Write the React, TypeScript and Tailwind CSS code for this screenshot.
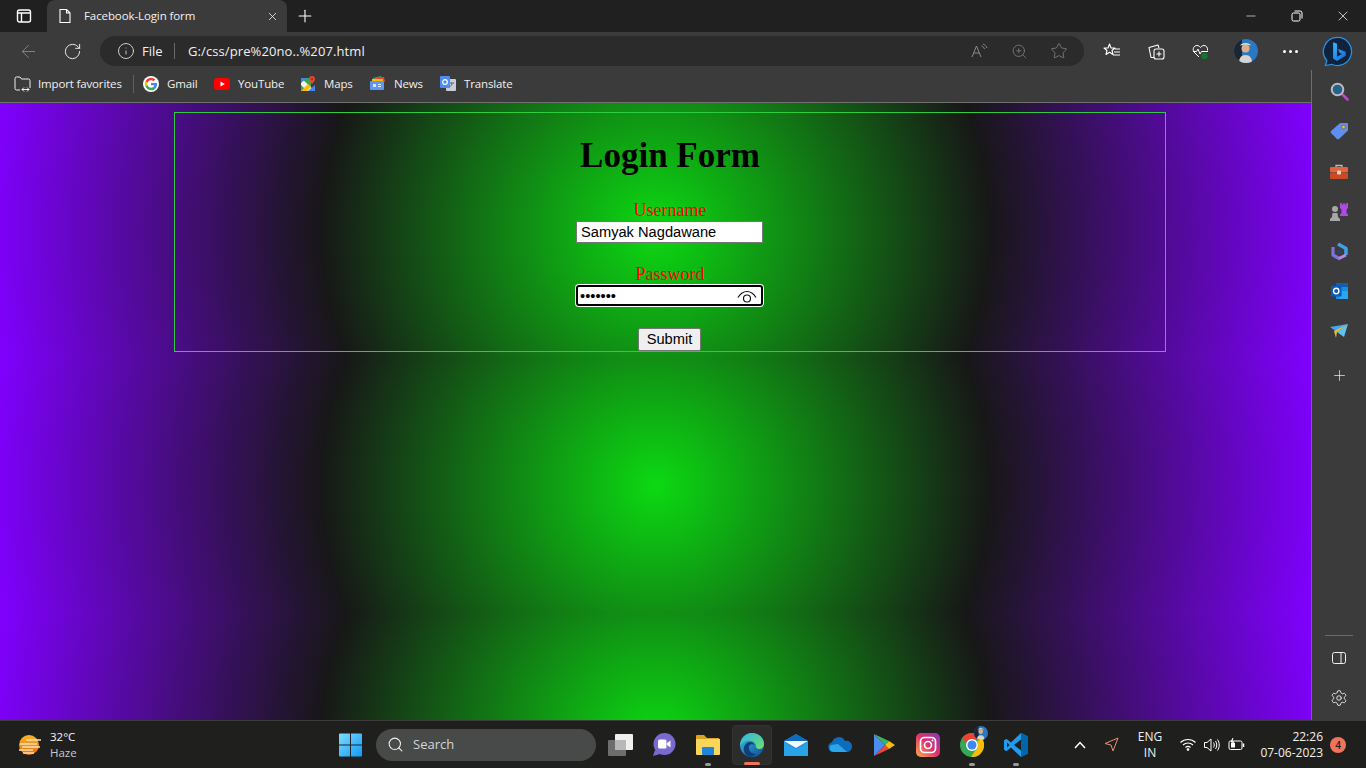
import { ArrowLeft, Info, Minus, Plus, RotateCw, Search, Settings, Star, X, ZoomIn } from "lucide-react";
import type { ReactNode } from "react";

const bookmarks = [
  { label: "Gmail", icon: <GoogleIcon />, width: "w-[71px]" },
  { label: "YouTube", icon: <YouTubeIcon />, width: "w-[86px]" },
  { label: "Maps", icon: <MapsIcon />, width: "w-[70px]" },
  { label: "News", icon: <NewsIcon />, width: "w-[70px]" },
  { label: "Translate", icon: <TranslateIcon />, width: "w-[87px]" },
];

function GoogleIcon() {
  return (
    <svg width="16" height="16" viewBox="0 0 48 48">
      <circle cx="24" cy="24" r="24" fill="#fff" />
      <path fill="#EA4335" d="M24 13c3 0 5.400 1 7.300 2.800l5.400-5.400C33.400 7.300 29 5.500 24 5.500c-7.200 0-13.500 4.100-16.500 10.200l6.300 4.900C15.300 16.100 19.300 13 24 13z" />
      <path fill="#4285F4" d="M42 24.500c0-1.300-.1-2.500-.3-3.700H24v7.200h10.200c-.5 2.400-1.800 4.400-3.800 5.700l6.100 4.700C40 35.100 42 30.200 42 24.500z" />
      <path fill="#FBBC05" d="M13.800 27.400c-.9-2.500-.9-4.400 0-6.800l-6.300-4.900c-2.600 5.200-2.600 11.400 0 16.600l6.300-4.900z" />
      <path fill="#34A853" d="M24 42.500c5 0 9.200-1.600 12.500-4.600l-6.100-4.700c-1.700 1.100-3.800 1.800-6.400 1.800-4.700 0-8.700-3.100-10.200-7.500l-6.300 4.900c3 6 9.300 10.100 16.500 10.100z" />
    </svg>
  );
}

function YouTubeIcon() {
  return (
    <svg width="16" height="12" viewBox="0 0 16 12">
      <rect width="16" height="12" rx="3" fill="#f00" />
      <path d="M6.500 3.500 10.800 6 6.500 8.500z" fill="#fff" />
    </svg>
  );
}

function MapsIcon() {
  return (
    <svg width="16" height="16" viewBox="0 0 16 16">
      <path d="M1 2h10v13H1z" fill="#34a853" />
      <path d="M1 2 15 15H7L1 9z" fill="#f1f3f4" />
      <path d="M1 15 8 8l3 3-4 4z" fill="#fbbc05" />
      <path d="M1 2h6L1 7z" fill="#4285f4" />
      <path d="M8 15h7V9z" fill="#4285f4" />
      <path d="M12 0a3 3 0 0 1 3 3c0 2-3 5-3 5S9 5 9 3a3 3 0 0 1 3-3z" fill="#ea4335" />
      <circle cx="12" cy="3" r="1" fill="#a52714" />
    </svg>
  );
}

function NewsIcon() {
  return (
    <svg width="16" height="15" viewBox="0 0 16 15">
      <path d="M3 2 11 0l1 4H3z" fill="#34a853" />
      <path d="M6 1h8l1 5H6z" fill="#ea4335" />
      <path d="M2 3h11v3H2z" fill="#fbbc05" />
      <rect x="0" y="5" width="14" height="9" rx="1" fill="#5e97f6" />
      <rect x="3" y="8" width="3" height="3" fill="#dbe7fb" />
      <rect x="8" y="8" width="3" height="1" fill="#dbe7fb" />
      <rect x="8" y="10" width="3" height="1" fill="#dbe7fb" />
    </svg>
  );
}

function TranslateIcon() {
  return (
    <svg width="16" height="16" viewBox="0 0 16 16">
      <rect x="6" y="3" width="10" height="12" rx="1" fill="#c9ced6" />
      <rect x="0" y="0" width="10" height="12" rx="1" fill="#4f8df5" />
      <circle cx="5" cy="6" r="2.300" fill="none" stroke="#fff" strokeWidth="1.200" />
      <path d="M10 7h4M12 7c0 2-1 3-2.500 4" stroke="#5f6368" strokeWidth="1" fill="none" />
    </svg>
  );
}

function Avatar({ size }: { size: number }) {
  return (
    <svg width={size} height={size} viewBox="0 0 24 24">
      <defs>
        <clipPath id={`avatar-${size}`}>
          <circle cx="12" cy="12" r="12" />
        </clipPath>
      </defs>
      <g clipPath={`url(#avatar-${size})`}>
        <rect width="24" height="24" fill="#2a78c4" />
        <rect width="8" height="24" fill="#1c2633" />
        <path d="M5 24c0-5 2-8 6.500-8s6.500 3 6.500 8z" fill="#d8d3cd" />
        <circle cx="11.500" cy="9.500" r="4" fill="#d9b08f" />
        <path d="M6 6.500c1-3.500 10-3.500 11 0-3-1-8-1-11 0z" fill="#dfe3b8" />
      </g>
    </svg>
  );
}

function BingIcon() {
  return (
    <svg width="31" height="31" viewBox="0 0 32 32">
      <defs>
        <linearGradient id="bing-fill" x1="0" y1="0" x2="1" y2="1">
          <stop offset="0" stopColor="#37bdff" />
          <stop offset="1" stopColor="#1b5fd6" />
        </linearGradient>
      </defs>
      <path d="M16 1.500a14.500 14.500 0 1 1-6 27.700L3.500 30.500l1.500-5A14.500 14.500 0 0 1 16 1.500z" fill="#10233c" stroke="#2a8fe0" strokeWidth="1.300" />
      <path d="M11.500 6.500 15.500 8v13.500l5-3-2.500-1.200-1.500-4 8 3v4l-9 5.500-4-2.500z" fill="url(#bing-fill)" />
    </svg>
  );
}

function SidebarIcon({ children }: { children: ReactNode }) {
  return <div className="flex h-[40px] w-full items-center justify-center">{children}</div>;
}

function WindowsLogo() {
  return (
    <svg className="ml-[1px]" width="23" height="24" viewBox="0 0 24 24">
      <defs>
        <linearGradient id="win-logo" x1="0" y1="0" x2="1" y2="1">
          <stop offset="0" stopColor="#7fdcff" />
          <stop offset="1" stopColor="#0f9bf5" />
        </linearGradient>
      </defs>
      <path d="M0 1a1 1 0 0 1 1-1h10.500v11.500H0zM12.500 0H23a1 1 0 0 1 1 1v10.500H12.500zM0 12.500h11.500V24H1a1 1 0 0 1-1-1zM12.500 12.500H24V23a1 1 0 0 1-1 1H12.500z" fill="url(#win-logo)" />
    </svg>
  );
}

function TaskCell({ children, dot, active }: { children: ReactNode; dot?: boolean; active?: boolean }) {
  return (
    <div className="relative flex h-[40px] w-[44px] items-center justify-center">
      {active && <div className="absolute left-[2px] top-0 h-[40px] w-[40px] rounded-[4px] border border-[#333432] bg-[#2c2d2b]" />}
      <div className="relative flex items-center justify-center">{children}</div>
      {dot && <div className="absolute bottom-[-1px] left-[19px] h-[3px] w-[6px] rounded-full bg-[#9a9a9a]" />}
      {active && <div className="absolute bottom-[0px] left-[14px] h-[3px] w-[16px] rounded-full bg-[#f0735c]" />}
    </div>
  );
}

function App() {
  return (
    <div className="flex h-screen w-full flex-col overflow-hidden bg-[#202020] font-['Open_Sans',sans-serif] text-white">
      {/* title bar */}
      <div className="flex h-[32px] shrink-0 items-stretch bg-[#202020]">
        <div className="flex w-[47px] items-center justify-center">
          <svg width="16" height="16" viewBox="0 0 16 16" fill="none" stroke="#fff" strokeWidth="1.400">
            <rect x="1.500" y="2" width="13" height="12" rx="2" />
            <path d="M1.500 5h13M5.500 5v9" />
          </svg>
        </div>
        <div className="flex w-[240px] items-center rounded-t-[8px] bg-[#3b3b3b] pl-[10px] pr-[10px]">
          <svg width="16" height="16" viewBox="0 0 16 16" fill="none" stroke="#fff" strokeWidth="1.100">
            <path d="M3 1.500h6.500L13 5v9.500H3zM9.500 1.500V5H13" strokeLinejoin="round" />
          </svg>
          <span className="ml-[11px] text-[11.5px] leading-none tracking-[-0.1px] text-[#f2f2f2]">Facebook-Login form</span>
          <X className="ml-auto mr-[-2px]" size={13} strokeWidth={1.500} color="#f0f0f0" />
        </div>
        <div className="flex w-[36px] items-center justify-center">
          <Plus size={20} strokeWidth={1.300} color="#fff" />
        </div>
        <div className="ml-auto flex items-center">
          <div className="flex w-[46px] items-center justify-center"><Minus size={14} strokeWidth={1.100} color="#fff" /></div>
          <div className="flex w-[46px] items-center justify-center">
            <svg width="12" height="12" viewBox="0 0 12 12" fill="none" stroke="#fff" strokeWidth="1">
              <rect x="1" y="3" width="8" height="8" rx="1.500" />
              <path d="M3.500 1h5.500a2 2 0 0 1 2 2v5.500" />
            </svg>
          </div>
          <div className="flex w-[46px] items-center justify-center"><X size={16} strokeWidth={1.100} color="#fff" /></div>
        </div>
      </div>

      {/* toolbar */}
      <div className="flex h-[38px] shrink-0 items-center bg-[#3b3b3b] pl-[6px]">
        <div className="flex w-[44px] justify-center"><ArrowLeft size={21} strokeWidth={1} color="#8a8a8a" /></div>
        <div className="flex w-[44px] justify-center"><RotateCw size={19} strokeWidth={1.200} color="#f0f0f0" /></div>
        <div className="ml-[6px] flex h-[30px] w-[984px] items-center rounded-full bg-[#2b2b2b] pl-[17px] text-[#f0f0f0]">
          <Info size={18} strokeWidth={1.100} color="#e8e8e8" />
          <span className="ml-[7px] w-[21px] whitespace-nowrap text-[13px] leading-none">File</span>
          <div className="ml-[11px] h-[16px] w-px bg-[#6a6a6a]" />
          <span className="ml-[13px] whitespace-nowrap text-[13px] leading-none tracking-[0.1px]">G:/css/pre%20no..%207.html</span>
          <div className="ml-auto flex items-center pr-[5px]">
            <div className="flex w-[40px] justify-center">
              <svg width="17" height="16" viewBox="0 0 17 16" fill="none" stroke="#8a8a8a" strokeWidth="1">
                <path d="M1 14 5.500 3 10 14M2.800 10h5.400M10.500 3c1.500.5 2.500 1.500 3 3M12 1c2 .8 3.300 2 4 4" />
              </svg>
            </div>
            <div className="flex w-[40px] justify-center"><ZoomIn size={17} strokeWidth={1} color="#8a8a8a" /></div>
            <div className="flex w-[40px] justify-center"><Star size={18} strokeWidth={1} color="#8a8a8a" /></div>
          </div>
        </div>
        <div className="ml-[6px] flex w-[44px] justify-center">
          <svg width="18" height="16" viewBox="0 0 18 16" fill="none" stroke="#fff" strokeWidth="1.100">
            <path d="M6.500 1 8 5h4L9 7.500l1 4-3.500-2.300L3 11.500l1-4L1 5h4zM12 6h5M11 9h6M10 12h7" strokeLinejoin="round" />
          </svg>
        </div>
        <div className="flex w-[44px] justify-center">
          <svg width="17" height="17" viewBox="0 0 17 17" fill="none" stroke="#fff" strokeWidth="1.100">
            <path d="M6 14.500H3L1 4.500 10 2l1 3" strokeLinejoin="round" />
            <rect x="6" y="6" width="10" height="10" rx="2" />
            <path d="M11 8.500v5M8.500 11h5" />
          </svg>
        </div>
        <div className="flex w-[44px] justify-center">
          <svg width="17" height="17" viewBox="0 0 17 17" fill="none">
            <path d="M7 14 2 9c-2-3 0-6.500 3-6.500 1.500 0 2.500.8 3.500 2 1-1.200 2-2 3.500-2 2.500 0 4 2.500 3.500 5M1 8.500h3.500L6 6l2 5 1.500-2.500H16" stroke="#fff" strokeWidth="1" />
            <circle cx="12.500" cy="13" r="3.200" fill="#10762c" />
          </svg>
        </div>
        <div className="ml-[2px] flex w-[44px] justify-center"><Avatar size={24} /></div>
        <div className="flex w-[44px] items-center justify-center gap-[3px]">
          <span className="h-[3px] w-[3px] rounded-full bg-white" />
          <span className="h-[3px] w-[3px] rounded-full bg-white" />
          <span className="h-[3px] w-[3px] rounded-full bg-white" />
        </div>
        <div className="ml-[3px] flex w-[44px] justify-center"><BingIcon /></div>
      </div>

      <div className="flex min-h-0 flex-1">
        <div className="flex min-w-0 flex-1 flex-col">
          {/* favorites bar */}
          <div className="flex h-[33px] shrink-0 items-center border-b border-[#707070] bg-[#3b3b3b] pb-[5px] pl-[14px] text-[11.5px] tracking-[-0.15px] text-[#f0f0f0]">
            <svg width="17" height="16" viewBox="0 0 17 16" fill="none" stroke="#f0f0f0" strokeWidth="1">
              <path d="M6 14H2.500A1.500 1.500 0 0 1 1 12.500v-10A1.500 1.500 0 0 1 2.500 1H6l1.500 2H14.500A1.500 1.500 0 0 1 16 4.500V12M8 13.500h7M10 11.500l-2 2 2 2M13 11.500l2 2-2 2" />
            </svg>
            <span className="ml-[7px] w-[85px] whitespace-nowrap leading-none">Import favorites</span>
            <div className="ml-[10px] mr-[9px] h-[18px] w-px bg-[#606060]" />
            {bookmarks.map((item) => (
              <div key={item.label} className={`flex items-center ${item.width}`}>
                <div className="flex w-[16px] justify-center">{item.icon}</div>
                <span className="ml-[8px] whitespace-nowrap leading-none">{item.label}</span>
              </div>
            ))}
          </div>

          {/* page */}
          <main className="min-h-0 flex-1 bg-[radial-gradient(circle,#0cd912,#171717,#8000ff)] bg-[length:100%_255px] pt-[9px] text-black">
            <form className="ml-[174px] flex h-[240px] w-[992px] flex-col items-center border border-[#2ecc40] pt-[22px]">
              <h1 className="font-['Liberation_Serif',serif] text-[35px] font-bold leading-[41px]">Login Form</h1>
              <label className="mt-[24px] font-['Liberation_Serif',serif] text-[18px] leading-[21px] text-[#ff0000]">Username</label>
              <input
                readOnly
                value="Samyak Nagdawane"
                className="mr-[1px] h-[22px] w-[187px] rounded-[1px] border border-[#767676] bg-white px-[4px] font-['Liberation_Sans',sans-serif] text-[14.67px] leading-none text-black outline-none"
              />
              <label className="mt-[21px] font-['Liberation_Serif',serif] text-[18px] leading-[21px] text-[#ff0000]">Password</label>
              <div className="relative mr-[1px]">
                <input
                  readOnly
                  type="password"
                  value="samyak1"
                  className="block h-[21px] w-[187px] rounded-[3px] border-2 border-black bg-white px-[2px] font-['Liberation_Sans',sans-serif] text-[14.67px] leading-none text-black shadow-[0_0_0_1px_#fff] outline-none"
                />
                <svg className="absolute right-[6px] top-[5px]" width="20" height="13" viewBox="0 0 20 13" fill="none" stroke="#111" strokeWidth="1.200">
                  <path d="M1 7.500C3.500 3.500 6.500 1.500 10 1.500s6.500 2 9 6" />
                  <circle cx="10" cy="8.500" r="3.500" />
                </svg>
              </div>
              <button type="button" className="mr-[1px] mt-[22px] h-[23px] w-[63px] rounded-[2px] border border-[#767676] bg-[#efefef] font-['Liberation_Sans',sans-serif] text-[14.67px] leading-none text-black">Submit</button>
            </form>
          </main>
        </div>

        {/* edge sidebar */}
        <aside className="flex w-[55px] shrink-0 flex-col items-center border-l border-[#6e6e6e] bg-[#3b3b3b] pt-[1px]">
          <SidebarIcon>
            <svg width="19" height="19" viewBox="0 0 19 19" fill="none">
              <path d="m12 12 5.500 5.500" stroke="#c545d8" strokeWidth="2.500" strokeLinecap="round" />
              <circle cx="7.500" cy="7.500" r="5.800" fill="#27628f" stroke="#b9bcc0" strokeWidth="2" />
            </svg>
          </SidebarIcon>
          <SidebarIcon>
            <svg width="19" height="18" viewBox="0 0 19 18">
              <path d="M11 1h6a1 1 0 0 1 1 1v6a2 2 0 0 1-.5 1L9 17a1.500 1.500 0 0 1-2 0L1 11a1.500 1.500 0 0 1 0-2l8.500-7.500A2 2 0 0 1 11 1z" fill="#5f8df0" />
              <circle cx="13.500" cy="5" r="1.800" fill="#f2c230" stroke="#6a5a20" strokeWidth="0.600" />
            </svg>
          </SidebarIcon>
          <SidebarIcon>
            <svg width="18" height="15" viewBox="0 0 18 15">
              <path d="M6 3V1.500h6V3" fill="none" stroke="#b9b9b9" strokeWidth="1.300" />
              <rect y="3" width="18" height="5.500" rx="1" fill="#e8633a" />
              <rect y="9" width="18" height="6" rx="1" fill="#c94a24" />
              <rect x="7" y="6.500" width="4" height="4" rx="1" fill="#f2cdb9" />
            </svg>
          </SidebarIcon>
          <SidebarIcon>
            <svg width="20" height="19" viewBox="0 0 20 19">
              <path d="M11 1h1.800v1.500h1.500V1h1.400v1.500h1.500V1H19v5l-1.500 1.500V11l1.500 1.500v1.500h-8v-1.500l1.500-1.500V7.500L11 6z" fill="#b04ae6" />
              <circle cx="6" cy="7" r="3" fill="#a7a7a7" />
              <path d="M3.500 11h5L9 15l2 2v2H1v-2l2-2z" fill="#a7a7a7" />
            </svg>
          </SidebarIcon>
          <SidebarIcon>
            <svg width="17" height="19" viewBox="0 0 17 19" fill="none">
              <path d="M7 2 15 6.500v6.500" stroke="#3fa0e6" strokeWidth="3.600" strokeLinejoin="round" />
              <path d="M2 5v8l7 4" stroke="#7f72d8" strokeWidth="3.200" strokeLinejoin="round" />
              <path d="M8 16.500 15 13" stroke="#b58ae0" strokeWidth="3" />
              <path d="M7 8l4 2-4 2z" fill="#26408a" />
            </svg>
          </SidebarIcon>
          <SidebarIcon>
            <svg width="17" height="16" viewBox="0 0 17 16">
              <path d="M5 0h11a1 1 0 0 1 1 1v14a1 1 0 0 1-1 1H5z" fill="#1490df" />
              <path d="M5 0h11a1 1 0 0 1 1 1v3H5z" fill="#0f5fb5" />
              <path d="M9 8h8v8H8z" fill="#28a8ea" />
              <rect y="2.500" width="10.500" height="11" rx="1" fill="#0a58c0" />
              <circle cx="5.200" cy="8" r="2.700" fill="none" stroke="#fff" strokeWidth="1.400" />
            </svg>
          </SidebarIcon>
          <SidebarIcon>
            <svg width="18" height="15" viewBox="0 0 18 15">
              <path d="M0 3 18 0 7 8z" fill="#3fa9ee" />
              <path d="M18 0 14 13 7 8z" fill="#5cc4f2" />
              <path d="M18 0 4 7l2 7 1-6z" fill="#f4b73a" />
            </svg>
          </SidebarIcon>
          <div className="mt-[4px] flex h-[40px] items-center justify-center"><Plus size={17} strokeWidth={1} color="#f0f0f0" /></div>
          <div className="mt-auto h-px w-[28px] bg-[#6a6a6a]" />
          <div className="mt-[15px] flex h-[14px] items-center justify-center">
            <svg width="14" height="12" viewBox="0 0 14 12" fill="none" stroke="#f0f0f0" strokeWidth="1">
              <rect x="0.500" y="0.500" width="13" height="11" rx="2" />
              <path d="M9 .5v11" />
            </svg>
          </div>
          <div className="mb-[13px] mt-[24px] flex h-[18px] items-center justify-center"><Settings size={18} strokeWidth={1.200} color="#f0f0f0" /></div>
        </aside>
      </div>

      {/* taskbar */}
      <div className="flex h-[48px] shrink-0 items-center border-t border-[#3c3c3c] bg-[#1f201e]">
        <div className="ml-[18px] flex w-[320px] items-center">
          <svg width="24" height="22" viewBox="0 0 24 22">
            <defs>
              <linearGradient id="sun" x1="0" y1="0" x2="0" y2="1">
                <stop offset="0" stopColor="#f9b52a" />
                <stop offset="1" stopColor="#ea6a0e" />
              </linearGradient>
            </defs>
            <circle cx="11" cy="11" r="10" fill="url(#sun)" />
            <path d="M8 6h15M2 10h17M4 13h18M1 16h14M5 19h11" stroke="#f8e2b0" strokeWidth="1.400" />
          </svg>
          <div className="ml-[8px] flex flex-col text-[11.5px] leading-[16px]">
            <span className="text-[#f5f5f5]">32°C</span>
            <span className="text-[#c8c8c8]">Haze</span>
          </div>
        </div>
        <WindowsLogo />
        <div className="ml-[14px] flex h-[32px] w-[220px] items-center rounded-full bg-[#474a48] pl-[11px]">
          <Search size={17} strokeWidth={1.500} color="#f0f0f0" />
          <span className="ml-[9px] text-[13px] leading-none text-[#d5d5d5]">Search</span>
        </div>
        <div className="ml-[2px] flex items-center">
          <TaskCell>
            <svg width="25" height="22" viewBox="0 0 25 22">
              <rect x="7" y="0" width="18" height="16" rx="1" fill="#f0f0f0" />
              <rect x="0" y="6" width="18" height="16" rx="1" fill="#6e6e6e" />
              <rect x="7" y="6" width="11" height="10" fill="#b8b8b8" />
            </svg>
          </TaskCell>
          <TaskCell>
            <svg width="24" height="23" viewBox="0 0 24 23">
              <circle cx="12.500" cy="11" r="11" fill="#7a6ad0" />
              <path d="M3 17l-2 6 7-2z" fill="#7a6ad0" />
              <rect x="6" y="6.500" width="8.500" height="9" rx="1.500" fill="#fff" />
              <path d="m15 10 3.500-2.500v7L15 12z" fill="#fff" />
            </svg>
          </TaskCell>
          <TaskCell dot>
            <svg width="24" height="22" viewBox="0 0 24 22">
              <path d="M0 2a1 1 0 0 1 1-1h7l3 3h12v4H0z" fill="#d8a520" />
              <path d="M0 5h24v15a1 1 0 0 1-1 1H1a1 1 0 0 1-1-1z" fill="#f9d55c" />
              <rect x="6" y="13" width="12" height="8" rx="1" fill="#1e86d8" />
            </svg>
          </TaskCell>
          <TaskCell active>
            <svg width="24" height="24" viewBox="0 0 24 24">
              <defs>
                <linearGradient id="edge-a" x1="0" y1="0" x2="1" y2="1">
                  <stop offset="0" stopColor="#35c1f1" />
                  <stop offset="1" stopColor="#114a8b" />
                </linearGradient>
                <linearGradient id="edge-b" x1="0" y1="0" x2="1" y2="1">
                  <stop offset="0" stopColor="#2fb5e8" />
                  <stop offset="1" stopColor="#6fe06a" />
                </linearGradient>
              </defs>
              <circle cx="12" cy="12" r="12" fill="url(#edge-a)" />
              <path d="M12 0c7 0 12 5 12 11 0 3-2 5-5 5-2 0-3-1-3-2.500 0-3-3-6-7-6-4 0-7 2-9 5C1 6 5 0 12 0z" fill="url(#edge-b)" />
              <path d="M9 13c-1 4 2 8 7 8-2 2-5 3-7 2.500C5 22 3 18 4 14c1-3 3-5 6-5 2 0 4 1 4.500 3-2-1.500-4.500-1-5.500 1z" fill="#0f3f7a" />
            </svg>
          </TaskCell>
          <TaskCell>
            <svg width="24" height="22" viewBox="0 0 24 22">
              <path d="M0 7 12 0l12 7v14a1 1 0 0 1-1 1H1a1 1 0 0 1-1-1z" fill="#1c88d4" />
              <path d="M0 7h24l-12 7z" fill="#f2f7fb" />
              <path d="M0 7 12 0l12 7-12 0z" fill="#0f6cbd" />
              <path d="M0 8l12 7 12-7v14H0z" fill="#28a3e6" />
            </svg>
          </TaskCell>
          <TaskCell>
            <svg width="24" height="15" viewBox="0 0 24 15">
              <path d="M5 15a5 5 0 0 1-1-9.800A7 7 0 0 1 17 4a5.500 5.500 0 0 1 7 5.500c0 3-2 5.500-5 5.500z" fill="#0f6cbd" />
              <path d="M5 15a4 4 0 0 1-2-7l7-1 9 8z" fill="#28a8ea" />
            </svg>
          </TaskCell>
          <TaskCell>
            <svg width="22" height="24" viewBox="0 0 22 24">
              <path d="M1 1v22l11-11z" fill="#4a8cf0" />
              <path d="M1 1l11 11 4-4z" fill="#35b56a" />
              <path d="M1 23l11-11 4 4z" fill="#e8483f" />
              <path d="M16 8l6 4-6 4-4-4z" fill="#f9bc15" />
            </svg>
          </TaskCell>
          <TaskCell>
            <svg width="24" height="24" viewBox="0 0 24 24">
              <defs>
                <linearGradient id="insta" x1="0" y1="1" x2="1" y2="0">
                  <stop offset="0" stopColor="#fcb045" />
                  <stop offset="0.500" stopColor="#e1306c" />
                  <stop offset="1" stopColor="#833ab4" />
                </linearGradient>
              </defs>
              <rect width="24" height="24" rx="5" fill="url(#insta)" />
              <rect x="4.500" y="4.500" width="15" height="15" rx="4" fill="none" stroke="#fff" strokeWidth="1.700" />
              <circle cx="12" cy="12" r="3.500" fill="none" stroke="#fff" strokeWidth="1.700" />
              <circle cx="16.500" cy="7.500" r="1" fill="#fff" />
            </svg>
          </TaskCell>
          <TaskCell dot>
            <div className="relative">
              <svg width="24" height="24" viewBox="0 0 24 24">
                <circle cx="12" cy="12" r="12" fill="#34a853" />
                <path d="M12 0a12 12 0 0 1 10.400 6H12a6 6 0 0 0-5.700 4L2.200 5A12 12 0 0 1 12 0z" fill="#ea4335" />
                <path d="M22.400 6A12 12 0 0 1 11 24l5.300-8A6 6 0 0 0 17 8z" fill="#fbbc05" />
                <circle cx="12" cy="12" r="6" fill="#fff" />
                <circle cx="12" cy="12" r="4.500" fill="#4285f4" />
              </svg>
              <div className="absolute left-[14px] top-[-7px]"><Avatar size={14} /></div>
            </div>
          </TaskCell>
          <TaskCell dot>
            <svg width="24" height="24" viewBox="0 0 24 24">
              <path d="M17 0 24 3.500v17L17 24 7 14.500 2.500 18 0 16.500V7.500L2.500 6 7 9.500z" fill="#1f9cf0" />
              <path d="M17 6.500 10 12l7 5.500z" fill="#1f201e" />
              <path d="M17 0l7 3.500v17L17 24z" fill="#0065a9" />
              <path d="M2.500 6 0 7.500v9L2.500 18 6 14.500V9.500z" fill="#1f9cf0" />
              <path d="M3 9.500v5L5.500 12z" fill="#1f201e" />
            </svg>
          </TaskCell>
        </div>
        <div className="ml-[31px] flex w-[22px] justify-center">
          <svg width="12" height="8" viewBox="0 0 12 8" fill="none" stroke="#fff" strokeWidth="1.500"><path d="m1 7 5-5.500L11 7" /></svg>
        </div>
        <div className="ml-[9px] flex w-[22px] justify-center">
          <svg width="15" height="15" viewBox="0 0 15 15" fill="none" stroke="#e8906f" strokeWidth="1"><path d="M14 1 1 6.500l6 1.500 2 6z" strokeLinejoin="round" /></svg>
        </div>
        <div className="ml-[13px] flex w-[30px] flex-col items-center text-[12px] leading-[16px] text-[#f0f0f0]">
          <span>ENG</span>
          <span>IN</span>
        </div>
        <div className="ml-[11px] flex items-center">
          <div className="flex w-[24px] justify-center">
            <svg width="16" height="13" viewBox="0 0 16 13" fill="none" stroke="#fff" strokeWidth="1.100">
              <path d="M.5 4.500c4-4 11-4 15 0M3 7c2.800-2.700 7.200-2.700 10 0M5.500 9.500c1.500-1.300 3.500-1.300 5 0" />
              <circle cx="8" cy="11.500" r="0.800" fill="#fff" />
            </svg>
          </div>
          <div className="flex w-[24px] justify-center">
            <svg width="16" height="14" viewBox="0 0 16 14" fill="none" stroke="#fff" strokeWidth="1">
              <path d="M.5 4.500h2.500L7 1v12L3 9.500H.5zM9.500 4.500c1 1.500 1 3.500 0 5M11.500 3c1.700 2.400 1.700 5.600 0 8M13.500 1.500c2.300 3.200 2.300 7.800 0 11" />
            </svg>
          </div>
          <div className="flex w-[24px] justify-center">
            <svg width="17" height="13" viewBox="0 0 17 13" fill="none" stroke="#fff" strokeWidth="1">
              <rect x="1" y="3" width="13" height="8.500" rx="1.500" />
              <rect x="3" y="5" width="4" height="4.500" fill="#fff" stroke="none" />
              <path d="M15.500 5.500v3.500" strokeWidth="1.500" />
              <path d="M5 0 3 4h3l-2 3.500" fill="#fff" />
            </svg>
          </div>
        </div>
        <div className="ml-[3px] flex w-[72px] flex-col items-end text-[12px] leading-[16px] text-[#f0f0f0]">
          <span>22:26</span>
          <span>07-06-2023</span>
        </div>
        <div className="ml-[7px] flex h-[16px] w-[16px] items-center justify-center rounded-full bg-[#f0735c] text-[10px] font-semibold leading-none text-[#1f201e]">4</div>
      </div>
    </div>
  );
}

export default App;
